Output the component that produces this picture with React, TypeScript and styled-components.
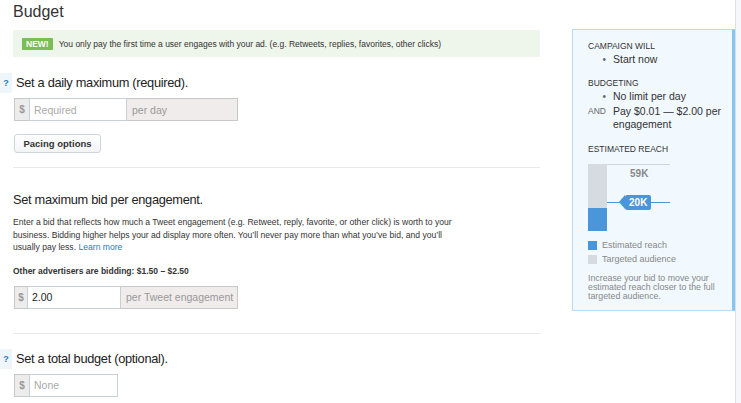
import styled, { createGlobalStyle } from 'styled-components'

const GlobalStyle = createGlobalStyle`
  body {
    margin: 0;
    background: #fff;
    font-family: 'Liberation Sans', Arial, sans-serif;
    color: #333;
  }
`

const Page = styled.div`
  display: flex;
  min-height: 403px;
`

const Main = styled.div`
  width: 527px;
  padding-left: 13px;
`

const Title = styled.h1`
  margin: 0;
  padding-top: 3px;
  height: 27px;
  font-size: 16px;
  font-weight: 400;
  color: #333;
`

const Notice = styled.div`
  display: flex;
  align-items: center;
  gap: 6px;
  height: 27px;
  padding-left: 9px;
  background: #eef5ea;
  font-size: 8.5px;
  color: #333;
`

const NewBadge = styled.span`
  background: #79bd54;
  color: #fff;
  font-weight: 700;
  font-size: 8.5px;
  padding: 1px 4px;
  border-radius: 1px;
`

const Section = styled.section<{ top: number }>`
  padding-top: ${(props) => props.top}px;
`

const HeadingRow = styled.div<{ help?: boolean }>`
  display: flex;
  align-items: center;
  margin-left: ${(props) => (props.help ? '-13px' : '0')};
`

const HelpIcon = styled.span`
  width: 12px;
  height: 20px;
  margin-right: 4px;
  display: flex;
  align-items: center;
  justify-content: center;
  background: #eef6fc;
  color: #2b7bb9;
  font-weight: 700;
  font-size: 9px;
`

const Heading = styled.h2`
  margin: 0;
  font-size: 12.8px;
  letter-spacing: -0.3px;
  font-weight: 400;
  color: #222;
  line-height: 20px;
`

const InputGroup = styled.div<{ top: number }>`
  display: flex;
  height: 23px;
  margin-left: 1px;
  margin-top: ${(props) => props.top}px;
`

const Dollar = styled.span<{ w: number }>`
  width: ${(props) => props.w}px;
  box-sizing: border-box;
  display: flex;
  align-items: center;
  justify-content: center;
  background: #ececec;
  border: 1px solid #c8c8c8;
  border-right: none;
  color: #999;
  font-weight: 700;
  font-size: 10px;
`

const TextInput = styled.input<{ w: number }>`
  width: ${(props) => props.w}px;
  box-sizing: border-box;
  height: 23px;
  margin: 0;
  padding: 0 4px;
  border: 1px solid #c8d0d6;
  outline: none;
  font-family: inherit;
  font-size: 10.5px;
  color: #222;
  &::placeholder {
    color: #aaa;
  }
`

const Addon = styled.span<{ w: number }>`
  width: ${(props) => props.w}px;
  box-sizing: border-box;
  display: flex;
  align-items: center;
  padding-left: 5px;
  background: #f0ecec;
  border: 1px solid #c8c8c8;
  border-left: none;
  color: #999;
  font-size: 10.5px;
`

const PacingButton = styled.button`
  margin: 13px 0 0 1px;
  width: 87px;
  height: 19px;
  padding: 0;
  border: 1px solid #cfd4d8;
  border-radius: 3px;
  background: linear-gradient(#fff, #f2f4f5);
  font-family: inherit;
  font-weight: 700;
  font-size: 9.5px;
  color: #333;
`

const Divider = styled.hr<{ top: number }>`
  margin: ${(props) => props.top}px 0 0;
  border: none;
  border-top: 1px solid #e6e8ea;
`

const Paragraph = styled.p`
  margin: 6px 0 0;
  font-size: 8.6px;
  line-height: 12.5px;
  color: #333;
`

const Link = styled.a`
  color: #2b7bb9;
  text-decoration: none;
`

const Bidding = styled.p`
  margin: 12px 0 0;
  font-size: 8.5px;
  font-weight: 700;
  color: #333;
`

const Sidebar = styled.aside`
  margin-left: 32px;
  margin-top: 29px;
  width: 163px;
  height: 282px;
  box-sizing: border-box;
  padding: 10px 10px 0 15px;
  background: #f1f8fe;
  border: 1px solid #b9dcf5;
  border-right: 3px solid #86c4f1;
`

const SideLabel = styled.div<{ top: number }>`
  margin-top: ${(props) => props.top}px;
  font-size: 8.5px;
  line-height: 12px;
  color: #333;
  text-transform: uppercase;
`

const SideRow = styled.div`
  display: flex;
  margin-top: 1px;
  font-size: 10.5px;
  line-height: 13.5px;
  color: #333;
`

const RowMark = styled.span<{ small?: boolean }>`
  width: 25px;
  flex: none;
  font-size: ${(props) => (props.small ? '8.5px' : '10px')};
  text-align: ${(props) => (props.small ? 'left' : 'right')};
  padding-right: ${(props) => (props.small ? '0' : '7px')};
  box-sizing: border-box;
  color: #666;
`

const Chart = styled.div`
  display: flex;
  margin-top: 9px;
  height: 67px;
`

const BarTrack = styled.div`
  width: 19px;
  display: flex;
  flex-direction: column;
  justify-content: flex-end;
  background: #d5dbe0;
`

const BarFill = styled.div`
  background: #4a96db;
`

const ChartArea = styled.div`
  width: 63px;
  border-top: 1px solid #cfd6dc;
  display: flex;
  flex-direction: column;
`

const TotalLabel = styled.div`
  padding: 3px 0 0 23px;
  line-height: 12px;
  font-size: 10px;
  font-weight: 700;
  color: #888;
`

const ReachLine = styled.div`
  position: relative;
  margin-top: 22px;
  height: 1px;
  background: #4a96db;
`

const ReachTag = styled.span`
  position: absolute;
  left: 18px;
  top: -7px;
  height: 15px;
  padding: 0 4px;
  display: flex;
  align-items: center;
  background: #4a96db;
  color: #fff;
  font-weight: 700;
  font-size: 10px;
  border-radius: 2px;
  &::before {
    content: '';
    position: absolute;
    left: -6px;
    top: 0;
    border-top: 7.5px solid transparent;
    border-bottom: 7.5px solid transparent;
    border-right: 6px solid #4a96db;
  }
`

const Legend = styled.div`
  margin-top: 10px;
  display: flex;
  flex-direction: column;
  gap: 5px;
`

const LegendItem = styled.div`
  display: flex;
  align-items: center;
  gap: 5px;
  font-size: 9px;
  line-height: 9px;
  color: #888;
`

const Swatch = styled.span<{ color: string }>`
  width: 9px;
  height: 9px;
  background: ${(props) => props.color};
`

const Hint = styled.p`
  margin: 10px 0 0;
  font-size: 8.8px;
  line-height: 9px;
  color: #888;
`

const Edge = styled.div`
  flex: 1;
  border-left: 1px solid #dedede;
  background: #f5f7fb;
`

export default function App() {
  const estimated = 20
  const targeted = 59
  return (
    <Page>
      <GlobalStyle />
      <Main>
        <Title>Budget</Title>
        <Notice>
          <NewBadge>NEW!</NewBadge>
          You only pay the first time a user engages with your ad. (e.g. Retweets, replies, favorites, other clicks)
        </Notice>

        <Section top={16}>
          <HeadingRow help>
            <HelpIcon>?</HelpIcon>
            <Heading>Set a daily maximum (required).</Heading>
          </HeadingRow>
          <InputGroup top={5}>
            <Dollar w={15}>$</Dollar>
            <TextInput w={98} placeholder="Required" />
            <Addon w={111}>per day</Addon>
          </InputGroup>
          <PacingButton>Pacing options</PacingButton>
          <Divider top={14} />
        </Section>

        <Section top={22}>
          <Heading>Set maximum bid per engagement.</Heading>
          <Paragraph>
            Enter a bid that reflects how much a Tweet engagement (e.g. Retweet, reply, favorite, or other click) is worth to your
            <br />
            business. Bidding higher helps your ad display more often. You’ll never pay more than what you’ve bid, and you’ll
            <br />
            usually pay less. <Link href="#">Learn more</Link>
          </Paragraph>
          <Bidding>Other advertisers are bidding: $1.50 – $2.50</Bidding>
          <InputGroup top={10}>
            <Dollar w={13}>$</Dollar>
            <TextInput w={94} defaultValue="2.00" />
            <Addon w={117}>per Tweet engagement</Addon>
          </InputGroup>
          <Divider top={24} />
        </Section>

        <Section top={15}>
          <HeadingRow help>
            <HelpIcon>?</HelpIcon>
            <Heading>Set a total budget (optional).</Heading>
          </HeadingRow>
          <InputGroup top={5}>
            <Dollar w={15}>$</Dollar>
            <TextInput w={89} placeholder="None" />
          </InputGroup>
        </Section>
      </Main>

      <Sidebar>
        <SideLabel top={0}>Campaign will</SideLabel>
        <SideRow>
          <RowMark>•</RowMark>Start now
        </SideRow>
        <SideLabel top={10.5}>Budgeting</SideLabel>
        <SideRow>
          <RowMark>•</RowMark>No limit per day
        </SideRow>
        <SideRow>
          <RowMark small>AND</RowMark>
          <span>Pay $0.01 — $2.00 per engagement</span>
        </SideRow>
        <SideLabel top={11.5}>Estimated reach</SideLabel>
        <Chart>
          <BarTrack>
            <BarFill style={{ height: `${(estimated / targeted) * 100}%` }} />
          </BarTrack>
          <ChartArea>
            <TotalLabel>{targeted}K</TotalLabel>
            <ReachLine>
              <ReachTag>{estimated}K</ReachTag>
            </ReachLine>
          </ChartArea>
        </Chart>
        <Legend>
          <LegendItem>
            <Swatch color="#4a96db" />
            Estimated reach
          </LegendItem>
          <LegendItem>
            <Swatch color="#d5dbe0" />
            Targeted audience
          </LegendItem>
        </Legend>
        <Hint>Increase your bid to move your estimated reach closer to the full targeted audience.</Hint>
      </Sidebar>
      <Edge />
    </Page>
  )
}
